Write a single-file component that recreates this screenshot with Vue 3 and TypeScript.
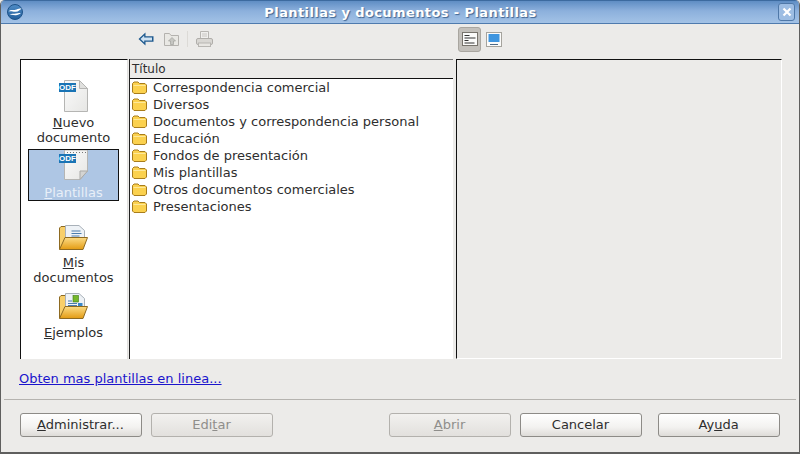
<script setup lang="ts">
const folders: string[] = [
  'Correspondencia comercial',
  'Diversos',
  'Documentos y correspondencia personal',
  'Educación',
  'Fondos de presentación',
  'Mis plantillas',
  'Otros documentos comerciales',
  'Presentaciones',
]
</script>

<template>
  <div class="window">
    <header class="titlebar">
      <svg class="app-icon" width="16" height="16" viewBox="0 0 16 16">
        <defs>
          <linearGradient id="globe" x1="0" y1="0" x2="0" y2="1">
            <stop offset="0" stop-color="#4f8cc6" />
            <stop offset="1" stop-color="#235f9c" />
          </linearGradient>
        </defs>
        <circle cx="8" cy="8" r="7.5" fill="url(#globe)" stroke="#1d5288" />
        <path d="M1.500 7.500C3.500 5 6 6.500 8.500 5.800 10.500 5.200 12 4 14.800 4.800 12.500 5.800 11.500 8.200 8 7.800 5.500 7.500 4 6.800 1.500 7.500z" fill="#fff" />
        <path d="M2.500 11C4.500 9.200 7 10 8.800 9.600c1.800-.4 3.200-1 5-.4-1.800 1-3 2.300-5.600 2-2-.2-3.500-.7-5.700-.2z" fill="#fff" />
      </svg>
      <div class="title">Plantillas y documentos - Plantillas</div>
      <div class="close">
        <svg width="10" height="10" viewBox="0 0 10 10"><path d="M1.500 1.500l7 7M8.500 1.500l-7 7" stroke="#fff" stroke-width="2.200" /></svg>
      </div>
    </header>

    <div class="toolbar">
      <div class="tools-left">
        <svg class="t-back" width="16" height="14" viewBox="0 0 16 14">
          <path d="M7.500 .5L.5 7l7 6.500V9.800H15.500V4.200H7.500z" fill="#1f5a8f" />
          <path d="M6.200 3.500L2.500 7l3.700 3.500V8.400H14V5.600H6.200z" fill="#cfe2f2" />
        </svg>
        <svg class="t-up" width="17" height="15" viewBox="0 0 17 15">
          <path d="M1.500 13.500V1.500h5l1.500 2h7.500v10z" fill="#e9e8e4" stroke="#b4b2ae" />
          <path d="M9 5.500l3.500 3.500H10.500v3.500h-3V9H5.500z" fill="#c6c6c2" stroke="#a0a09c" stroke-width=".7" />
        </svg>
        <span class="tool-sep"></span>
        <svg class="t-print" width="17" height="16" viewBox="0 0 17 16">
          <path d="M4.500 7.500V.5h8v7" fill="#f0efed" stroke="#b8b6b2" />
          <path d="M6 3h5M6 5h5" stroke="#c8c6c2" />
          <rect x=".5" y="7.500" width="16" height="6" rx="1.500" fill="#d9d7d3" stroke="#b0aeaa" />
          <rect x="2.500" y="12" width="12" height="3.500" fill="#e8e6e2" stroke="#b8b6b2" />
        </svg>
      </div>
      <div class="tools-right">
        <div class="view-btn active">
          <svg width="16" height="14" viewBox="0 0 16 14">
            <rect x=".5" y=".5" width="15" height="13" fill="#fbfbfa" stroke="#77736c" />
            <path d="M2.500 3.500h5M2.500 6h11M2.500 8.500h4M2.500 11h10" stroke="#333" />
          </svg>
        </div>
        <div class="view-btn">
          <svg width="16" height="15" viewBox="0 0 16 15">
            <rect x=".5" y=".5" width="15" height="14" fill="#fbfbfa" stroke="#a5a39d" />
            <rect x="2.500" y="2" width="11" height="8" fill="#3e95df" />
            <path d="M4 12.500h8" stroke="#4c6a88" />
          </svg>
        </div>
      </div>
    </div>

    <main class="panes">
      <nav class="side">
        <div class="side-item nuevo">
          <div class="doc-icon">
            <svg width="29" height="32" viewBox="0 0 29 32">
              <defs>
                <linearGradient id="paper" x1="0" y1="0" x2="1" y2="1">
                  <stop offset="0" stop-color="#fbfbfb" />
                  <stop offset="1" stop-color="#e6e6e4" />
                </linearGradient>
              </defs>
              <path d="M5.500 .5H20.500L28.500 8.500V31.500H5.500z" fill="url(#paper)" stroke="#b5b5b3" />
              <path d="M20.500 .5V8.500H28.500z" fill="#e0e0de" stroke="#b5b5b3" />
              <rect x="0" y="3" width="17" height="9" fill="#1a74b5" />
            </svg>
            <span class="odf">ODF</span>
          </div>
          <span class="lab"><u>N</u>uevo<br />documento</span>
        </div>
        <div class="side-item selected">
          <div class="doc-icon clipped">
            <svg width="29" height="30" viewBox="0 0 29 30">
              <path d="M5.500 0H28.500V21L21 29.500H5.500z" fill="url(#paper)" stroke="#b5b5b3" />
              <path d="M28.500 21H21V29.500z" fill="#d4d4d2" stroke="#a9a9a7" />
              <path d="M8 2.500H27" stroke="#777" stroke-dasharray="1 2" />
              <rect x="0" y="4" width="17" height="9" fill="#1a74b5" />
            </svg>
            <span class="odf">ODF</span>
          </div>
          <span class="lab light"><u>P</u>lantillas</span>
        </div>
        <div class="side-item mis">
          <svg width="29" height="25" viewBox="0 0 29 25">
            <defs>
              <linearGradient id="front" x1="0" y1="0" x2="0" y2="1">
                <stop offset="0" stop-color="#fcdc86" />
                <stop offset="1" stop-color="#e39b12" />
              </linearGradient>
            </defs>
            <path d="M.5 24V3l1.500-1.500h6L9.500 3h5v21z" fill="#f8cf6a" stroke="#8e6a21" />
            <path d="M6.500 .5H20L25.500 5.500V16H6.500z" fill="#eef2f6" stroke="#a9b1b9" />
            <path d="M12.500 6h9M12.500 8.500h10M12.500 11h8" stroke="#4b7dae" />
            <path d="M6 12.500H28.500L24 24.500H.5z" fill="url(#front)" stroke="#8e6a21" />
          </svg>
          <span class="lab"><u>M</u>is<br />documentos</span>
        </div>
        <div class="side-item ejemplos">
          <svg width="29" height="26" viewBox="0 0 29 26">
            <path d="M.5 25V4l1.500-1.500h6L9.500 4h5v21z" fill="#f8cf6a" stroke="#8e6a21" />
            <path d="M6.500 .5H20L25.500 5.500V17H6.500z" fill="#eef2f6" stroke="#a9b1b9" />
            <rect x="14" y="2.500" width="5.500" height="6.500" fill="#76b82a" stroke="#3f7a16" stroke-width=".6" />
            <rect x="19" y="10" width="4.500" height="4" fill="#3a87c8" />
            <path d="M9 8h4M9 10.500h9M9 12.500h9" stroke="#4b7dae" />
            <path d="M6 13.500H28.500L24 25.500H.5z" fill="url(#front)" stroke="#8e6a21" />
          </svg>
          <span class="lab"><u>E</u>jemplos</span>
        </div>
      </nav>

      <section class="list">
        <div class="list-head">Título</div>
        <ul class="rows">
          <li v-for="f in folders" :key="f" class="row">
            <svg width="15" height="13" viewBox="0 0 15 13">
              <path d="M.5 11V2.500L2 1h4l1.500 1.500H13L14.500 4v7L13 12.500H2z" fill="#fbd14e" stroke="#a87d1c" />
              <path d="M1.500 4.500h12" stroke="#fde89a" />
            </svg>
            <span>{{ f }}</span>
          </li>
        </ul>
      </section>

      <section class="preview"></section>
    </main>

    <div class="link-row"><a class="link">Obten mas plantillas en linea...</a></div>

    <footer class="footer">
      <button class="btn"><u>A</u>dministrar...</button>
      <button class="btn off edit">Edi<u>t</u>ar</button>
      <button class="btn off abrir"><u>A</u>brir</button>
      <button class="btn cancel">Cancelar</button>
      <button class="btn help">Ay<u>u</u>da</button>
    </footer>
  </div>
</template>

<style>
html, body { margin: 0; padding: 0; background: #ecebe9; }
</style>

<style scoped>
.window {
  width: 800px;
  height: 454px;
  box-sizing: border-box;
  display: flex;
  flex-direction: column;
  overflow: hidden;
  background: #ecebe9;
  border: 1px solid #5f5f5e;
  border-bottom-width: 2px;
  border-top: none;
  border-radius: 5px 5px 0 0;
  font-family: "DejaVu Sans", sans-serif;
  font-size: 13px;
  color: #2e2e2e;
}
.titlebar {
  height: 24px;
  flex: none;
  box-sizing: border-box;
  display: flex;
  align-items: center;
  padding: 0 4px 0 6px;
  background: linear-gradient(#5f8dc4, #8cb0dc 45%, #a3c2e6);
  border-top: 1px solid #3c6a9f;
  border-bottom: 1px solid #4f7bae;
}
.title {
  flex: 1;
  text-align: center;
  color: #fff;
  font-weight: bold;
  font-size: 13px;
  text-shadow: 1px 1px 1px #3f6491;
  letter-spacing: .4px;
}
.close {
  width: 17px;
  height: 18px;
  box-sizing: border-box;
  display: flex;
  align-items: center;
  justify-content: center;
  border: 1px solid #4f78a8;
  border-radius: 3px;
  background: #9dbde3;
}
.toolbar {
  height: 35px;
  flex: none;
  display: flex;
  align-items: center;
  padding: 0 0 5px 137px;
  box-sizing: border-box;
}
.tools-left { display: flex; align-items: center; width: 320px; }
.t-back { margin-right: 9px; flex: none; }
.t-up { margin-right: 7px; flex: none; }
.t-print { margin-left: 8px; flex: none; }
.tool-sep { width: 1px; height: 16px; background: #dcdad6; }
.tools-right { display: flex; align-items: center; gap: 1px; }
.view-btn {
  width: 23px; height: 25px; display: flex; align-items: center; justify-content: center;
}
.view-btn.active { background: #c3c0bb; border: 1px solid #a9a6a0; border-radius: 3px; box-sizing: border-box; }
.panes {
  height: 300px;
  flex: none;
  display: flex;
  margin: 0 17px 0 19px;
}
.side {
  width: 108px;
  box-sizing: border-box;
  flex: none;
  background: #fff;
  border-left: 1px solid #111;
  border-top: 1px solid #111;
  border-right: 1px solid #e2e1df;
  display: flex;
  flex-direction: column;
  align-items: center;
  padding: 20px 1px 0 0;
}
.side-item {
  display: flex;
  flex-direction: column;
  align-items: center;
  width: 91px;
  box-sizing: border-box;
  line-height: 15px;
  text-align: center;
}
.doc-icon { position: relative; width: 29px; height: 32px; }
.odf {
  position: absolute;
  left: 0;
  top: 3px;
  color: #fff;
  font-family: "Liberation Sans", sans-serif;
  font-size: 8px;
  font-weight: bold;
  line-height: 9px;
  width: 17px;
  text-align: center;
}
.lab { margin-top: 3px; }
.nuevo { height: 69px; }
.selected {
  height: 52px;
  background: #aec6e4;
  border: 1px solid #111;
}
.selected .lab { margin-top: 5px; }
.doc-icon.clipped { height: 30px; }
.doc-icon.clipped .odf { top: 4px; }
.lab.light { color: #e8eff8; }
.mis { margin-top: 24px; height: 68px; }
.mis .lab { margin-top: 5px; }
.ejemplos .lab { margin-top: 6px; }
.ejemplos { height: 50px; }
.list {
  width: 324px;
  margin-left: 1px;
  flex: none;
  box-sizing: border-box;
  background: #fff;
  border-left: 1px solid #222;
  display: flex;
  flex-direction: column;
}
.list-head {
  height: 20px;
  box-sizing: border-box;
  background: #ecebe9;
  border-top: 1px solid #777;
  border-bottom: 1px solid #111;
  padding-left: 2px;
  font-size: 12px;
  line-height: 18px;
}
.rows { list-style: none; margin: 0; padding: 0; }
.row {
  height: 17px;
  display: flex;
  align-items: center;
  padding-left: 2px;
  gap: 6px;
  line-height: 17px;
  white-space: nowrap;
}
.preview {
  flex: 1;
  margin-left: 3px;
  background: #ecebe9;
  border-top: 1px solid #111;
  border-left: 1px solid #111;
  border-right: 1px solid #fff;
  border-bottom: 1px solid #fff;
}
.link-row { height: 40px; flex: none; padding: 11px 0 0 18px; box-sizing: border-box; line-height: 17px; }
.link { color: #1a14cc; text-decoration: underline; }
.footer {
  flex: 1;
  margin: 0 3px;
  border-top: 1px solid #b5b3af;
  display: flex;
  align-items: flex-start;
  padding: 13px 16px 0;
  box-sizing: border-box;
}
.btn {
  width: 122px;
  height: 24px;
  padding: 0 1px 2px 0;
  box-sizing: border-box;
  font: inherit;
  color: #2e2e2e;
  border: 1px solid #8d8b87;
  border-radius: 3px;
  background: linear-gradient(#fff, #f3f2f0 60%, #dedcd8);
}
.btn.off { color: #8f8e8b; border-color: #b3b1ad; background: linear-gradient(#f2f1ef, #e2e0dd); }
.edit { margin-left: 9px; }
.abrir { margin-left: 116px; }
.cancel { margin-left: 9px; }
.help { margin-left: 16px; }
</style>
